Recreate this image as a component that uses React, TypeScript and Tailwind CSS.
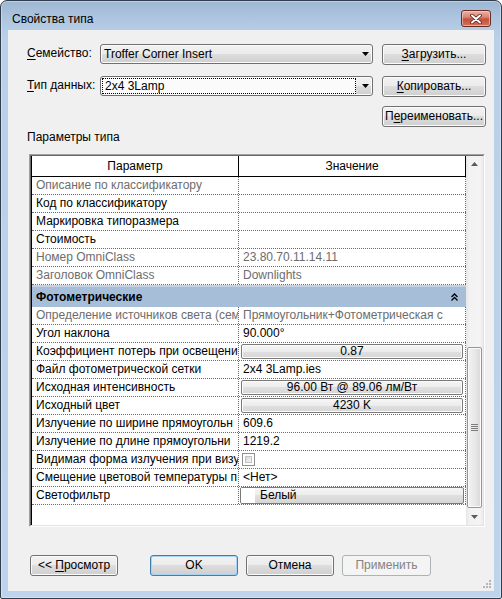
import React from 'react';

type Kind = 'text' | 'button' | 'check' | 'swatch';

interface Row {
  label: string;
  value?: string;
  kind?: Kind;
  gray?: boolean;
}

const identity: Row[] = [
  { label: 'Описание по классификатору', gray: true },
  { label: 'Код по классификатору' },
  { label: 'Маркировка типоразмера' },
  { label: 'Стоимость' },
  { label: 'Номер OmniClass', value: '23.80.70.11.14.11', gray: true },
  { label: 'Заголовок OmniClass', value: 'Downlights', gray: true },
];

const photometric: Row[] = [
  { label: 'Определение источников света (сем', value: 'Прямоугольник+Фотометрическая с', gray: true },
  { label: 'Угол наклона', value: '90.000°' },
  { label: 'Коэффициент потерь при освещени', value: '0.87', kind: 'button' },
  { label: 'Файл фотометрической сетки', value: '2x4 3Lamp.ies' },
  { label: 'Исходная интенсивность', value: '96.00 Вт @ 89.06 лм/Вт', kind: 'button' },
  { label: 'Исходный цвет', value: '4230 K', kind: 'button' },
  { label: 'Излучение по ширине прямоугольн', value: '609.6' },
  { label: 'Излучение по длине прямоугольни', value: '1219.2' },
  { label: 'Видимая форма излучения при визу', kind: 'check' },
  { label: 'Смещение цветовой температуры п', value: '<Нет>' },
  { label: 'Светофильтр', value: 'Белый', kind: 'swatch' },
];

function U({ children }: { children: React.ReactNode }) {
  return <span className="underline decoration-1 underline-offset-[2px]">{children}</span>;
}

function WinButton({
  children,
  className = '',
  primary,
  disabled,
}: {
  children: React.ReactNode;
  className?: string;
  primary?: boolean;
  disabled?: boolean;
}) {
  const look = disabled
    ? 'border-[#adb2b5] bg-[#f4f4f4] text-[#838383]'
    : primary
      ? 'border-[#3c7fb1] bg-[linear-gradient(#f2f2f2,#ebebeb_50%,#dddddd_50%,#cfcfcf)] text-black shadow-[inset_0_0_0_1px_#a6d4f2]'
      : 'border-[#707070] bg-[linear-gradient(#f2f2f2,#ebebeb_50%,#dddddd_50%,#cfcfcf)] text-black shadow-[inset_0_0_0_1px_#fbfbfb]';
  return (
    <div className={`flex h-[21px] shrink-0 items-center justify-center whitespace-pre rounded-[3px] border text-[12px] leading-[15px] ${look} ${className}`}>
      {children}
    </div>
  );
}

function ComboArrow() {
  return (
    <svg width="7" height="4" viewBox="0 0 7 4" className="shrink-0">
      <path d="M0 0 H7 L3.5 4 Z" fill="#000" />
    </svg>
  );
}

function CellButton({ children }: { children: React.ReactNode }) {
  return (
    <div className="mx-[2px] flex h-[15px] flex-1 items-center justify-center rounded-[2px] border border-[#7a7a7a] bg-[linear-gradient(#f6f6f6,#ececec_50%,#e0e0e0_50%,#d6d6d6)] text-black shadow-[inset_0_0_0_1px_#fcfcfc]">
      {children}
    </div>
  );
}

function Value({ row }: { row: Row }) {
  if (row.kind === 'button') return <CellButton>{row.value}</CellButton>;
  if (row.kind === 'check')
    return (
      <div className="ml-[3px] h-[13px] w-[13px] border border-[#8e8f8f] bg-white p-[2px]">
        <div className="h-full w-full border border-[#c2c2c2] bg-[linear-gradient(135deg,#d6d6d6,#f7f7f7)]" />
      </div>
    );
  if (row.kind === 'swatch')
    return (
      <div className="mx-[1px] flex h-[17px] flex-1 overflow-hidden rounded-[2px] border border-[#7a7a7a] bg-[linear-gradient(#f6f6f6,#ececec_50%,#e0e0e0_50%,#d6d6d6)] text-black">
        <div className="w-[14px] bg-white" />
        <div className="flex items-center pl-[5px]">{row.value}</div>
      </div>
    );
  return <span className="pl-[4px]">{row.value}</span>;
}

function ParamRow({ row }: { row: Row }) {
  const tone = row.gray ? 'text-[#6d6d6d]' : 'text-black';
  return (
    <div className="flex h-[18px] border-b border-dotted border-[#6b6b6b]">
      <div className={`flex w-[207px] shrink-0 items-center overflow-hidden whitespace-nowrap border-r border-dotted border-[#6b6b6b] pl-[4px] ${tone}`}>
        {row.label}
      </div>
      <div className={`flex w-[227px] shrink-0 items-center overflow-hidden whitespace-nowrap border-r border-dotted border-[#6b6b6b] ${tone}`}>
        <Value row={row} />
      </div>
    </div>
  );
}

function ScrollArrow({ up }: { up?: boolean }) {
  return (
    <div className="flex h-[17px] items-center justify-center">
      <svg width="7" height="4" viewBox="0 0 7 4">
        <path d={up ? 'M0 4 H7 L3.5 0 Z' : 'M0 0 H7 L3.5 4 Z'} fill="#5c5c5c" />
      </svg>
    </div>
  );
}

function Scrollbar() {
  return (
    <div className="flex w-[17px] shrink-0 flex-col bg-[linear-gradient(90deg,#e6e6e6,#f2f2f2_20%,#f4f4f4_80%,#ececec)]">
      <ScrollArrow up />
      <div className="h-[175px]" />
      <div className="mx-[1px] flex h-[162px] items-center justify-center rounded-[2px] border border-[#979797] bg-[linear-gradient(90deg,#f3f3f3,#e8e8e8_50%,#d9d9d9)] shadow-[inset_0_0_0_1px_#fafafa]">
        <div className="flex flex-col gap-[1px]">
          <div className="h-[1px] w-[7px] bg-[#7d7d7d]" />
          <div className="h-[1px] w-[7px] bg-[#7d7d7d]" />
          <div className="h-[1px] w-[7px] bg-[#7d7d7d]" />
          <div className="h-[1px] w-[7px] bg-[#7d7d7d]" />
        </div>
      </div>
      <div className="flex-1" />
      <ScrollArrow />
    </div>
  );
}

function ParamTable() {
  return (
    <div className="ml-[21px] w-[456px] border border-[#a0a0a0] border-b-white border-r-white">
      <div className="flex h-[371px] border border-[#696969] border-b-[#e3e3e3] border-r-[#e3e3e3] bg-white">
        <div className="flex w-[435px] shrink-0 flex-col border-l border-black">
          <div className="flex h-[21px] shrink-0 border-b border-black">
            <div className="flex w-[207px] items-center justify-center border-r border-black">Параметр</div>
            <div className="flex w-[227px] items-center justify-center border-r border-black">Значение</div>
          </div>
          {identity.map((r) => (
            <ParamRow key={r.label} row={r} />
          ))}
          <div className="flex h-[22px] shrink-0 items-center justify-between border-t-2 border-[#c3d3e5] bg-[#a6bed8] pl-[4px] pr-[8px] font-bold text-black">
            <span>Фотометрические</span>
            <svg width="7" height="8" viewBox="0 0 7 8">
              <path d="M0.5 4 L3.5 1 L6.5 4 M0.5 7.5 L3.5 4.5 L6.5 7.5" fill="none" stroke="#000" strokeWidth="1.3" />
            </svg>
          </div>
          {photometric.map((r) => (
            <ParamRow key={r.label} row={r} />
          ))}
        </div>
        <Scrollbar />
      </div>
    </div>
  );
}

export default function App() {
  return (
    <div className="h-[599px] w-[502px] bg-white font-['Liberation_Sans',Arial,sans-serif] text-[12px] leading-[15px] text-black">
      <div className="flex h-full flex-col rounded-t-[7px] rounded-b-[2px] border border-[#2f3d4c] bg-[linear-gradient(#9db6d2,#aec6e0_3%,#b9d0e8_6%,#bdd4ec)] px-[7px] pb-[7px] shadow-[inset_0_0_0_1px_rgba(255,255,255,0.35)]">
        <div className="flex h-[29px] shrink-0 items-start justify-between">
          <span className="pl-[4px] pt-[11px]">Свойства типа</span>
          <div className="mr-[3px] mt-[9px] flex h-[17px] w-[30px] items-center justify-center rounded-[3px] border border-[#6a2b22] bg-[linear-gradient(#eab1a4,#d98774_40%,#c4503b_55%,#d1735f)] shadow-[inset_0_0_0_1px_rgba(255,220,210,0.55)]">
            <svg width="12" height="10" viewBox="0 0 12 10">
              <path d="M2 1.5 L10 8.5 M10 1.5 L2 8.5" stroke="#5a1d14" strokeWidth="3.6" strokeLinecap="round" />
              <path d="M2 1.5 L10 8.5 M10 1.5 L2 8.5" stroke="#fff" strokeWidth="2" strokeLinecap="round" />
            </svg>
          </div>
        </div>

        <div className="relative flex flex-1 flex-col bg-[#f0f0f0] pt-[14px]">
          <div className="flex h-[21px] items-start">
            <div className="w-[92px] shrink-0 pl-[19px] pt-[2px]">
              <U>С</U>емейство:
            </div>
            <div className="flex h-[20px] w-[273px] shrink-0 items-center justify-between rounded-[3px] border border-[#707070] bg-[linear-gradient(#f2f2f2,#ebebeb_50%,#dddddd_50%,#cfcfcf)] pl-[3px] pr-[3px] shadow-[inset_0_0_0_1px_#fbfbfb]">
              <span>Troffer Corner Insert</span>
              <ComboArrow />
            </div>
            <WinButton className="ml-[9px] w-[104px]">
              <U>З</U>агрузить...
            </WinButton>
          </div>

          <div className="mt-[11px] flex h-[21px] items-start">
            <div className="w-[92px] shrink-0 pl-[19px] pt-[2px]">
              <U>Т</U>ип данных:
            </div>
            <div className="flex h-[20px] w-[273px] shrink-0 items-center rounded-[3px] border border-[#707070] bg-[linear-gradient(#f2f2f2,#ebebeb_50%,#dddddd_50%,#cfcfcf)] pr-[3px] shadow-[inset_0_0_0_1px_#fbfbfb]">
              <div className="ml-[1px] flex h-[16px] flex-1 items-center border border-dotted border-black bg-[#fbfbfb] pl-[2px]">
                2x4 3Lamp
              </div>
              <div className="ml-[6px]">
                <ComboArrow />
              </div>
            </div>
            <WinButton className="ml-[9px] w-[104px]">
              <U>К</U>опировать...
            </WinButton>
          </div>

          <div className="mt-[9px] flex h-[21px] justify-end pr-[8px]">
            <WinButton className="w-[104px]">
              П<U>е</U>реименовать...
            </WinButton>
          </div>

          <div className="mt-[3px] h-[15px] pl-[19px]">Параметры типа</div>

          <div className="mt-[9px]">
            <ParamTable />
          </div>

          <div className="mt-[28px] flex pl-[22px]">
            <WinButton className="w-[88px]">
              {'<<\u00a0'}
              <U>П</U>росмотр
            </WinButton>
            <WinButton primary className="ml-[32px] w-[88px]">
              OK
            </WinButton>
            <WinButton className="ml-[8px] w-[88px]">Отмена</WinButton>
            <WinButton disabled className="ml-[8px] w-[89px]">
              Применить
            </WinButton>
          </div>

          <svg width="9" height="9" viewBox="0 0 9 9" className="absolute bottom-[2px] right-[2px]">
            <rect x="6" y="0" width="2" height="2" fill="#b6b6b6" />
            <rect x="3" y="3" width="2" height="2" fill="#b6b6b6" />
            <rect x="6" y="3" width="2" height="2" fill="#b6b6b6" />
            <rect x="0" y="6" width="2" height="2" fill="#b6b6b6" />
            <rect x="3" y="6" width="2" height="2" fill="#b6b6b6" />
            <rect x="6" y="6" width="2" height="2" fill="#b6b6b6" />
          </svg>
        </div>
      </div>
    </div>
  );
}
